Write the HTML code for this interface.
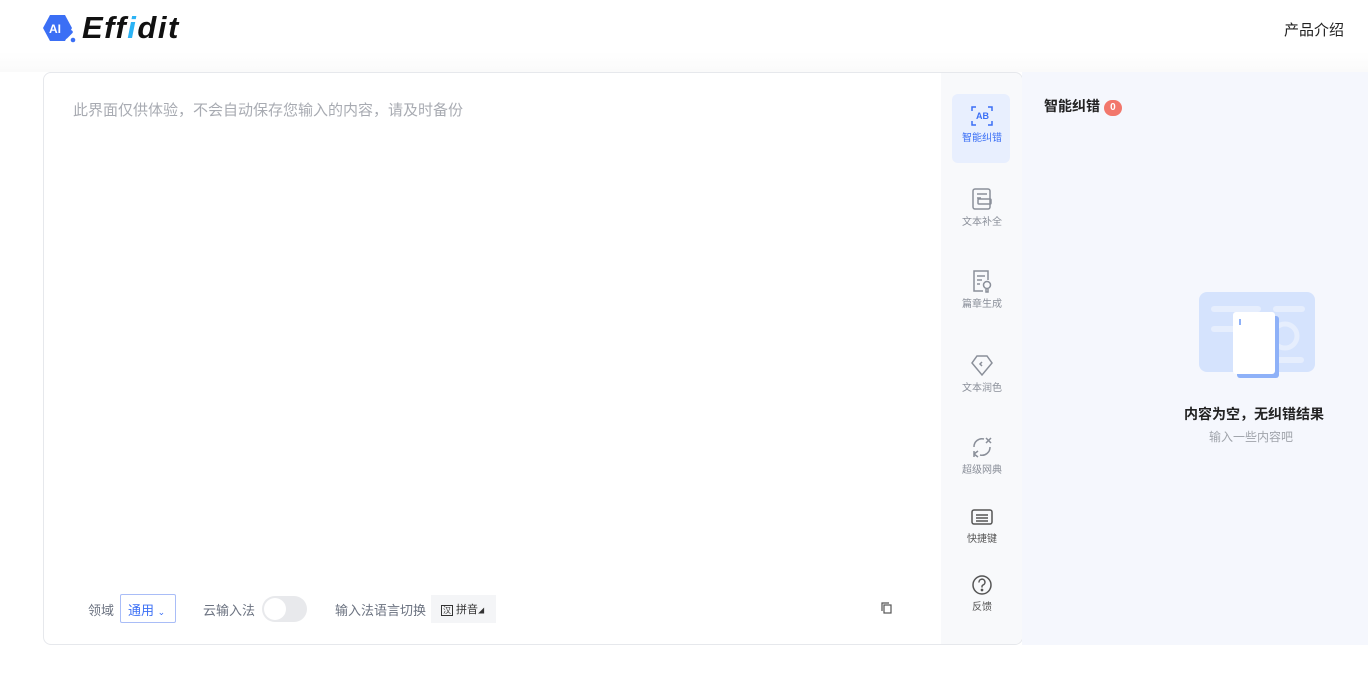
<!DOCTYPE html>
<html><head><meta charset="utf-8"><style>
*{margin:0;padding:0;box-sizing:border-box}
body{width:1368px;height:695px;background:#fff;font-family:"Liberation Sans","Noto Sans CJK SC",sans-serif;position:relative;overflow:hidden}
.abs{position:absolute}
.card{left:43px;top:72px;width:980px;height:573px;border:1px solid #e6e8ec;border-radius:8px;background:#fff;overflow:hidden}
.side{left:897px;top:0;width:82px;height:573px;background:#f8f9fb}
.it{position:absolute;left:12px;width:58px;text-align:center;font-size:10px;color:#8a8f99}
.it svg{display:block;margin:0 auto 2px}
.right{left:1022px;top:72px;width:346px;height:573px;background:#f5f7fd}
</style></head><body>
<div class="abs" style="left:42px;top:13px">
<svg width="36" height="32" viewBox="0 0 36 32"><path d="M8 2h15l7 13-7 13H8L1 15z" fill="#3b6ff5"/><text x="7" y="20" font-size="12" font-weight="bold" fill="#fff" font-family="Liberation Sans">AI</text><path d="M24 24l5-5" stroke="#3b6ff5" stroke-width="3.5" stroke-linecap="round"/><circle cx="31" cy="27" r="2.3" fill="#3b6ff5"/></svg>
</div>
<div class="abs" style="left:82px;top:10px;font-size:31px;font-weight:bold;font-style:italic;color:#111;letter-spacing:1.5px">Eff<span style="color:#2bb3f5">i</span>dit</div>
<div class="abs" style="left:1284px;top:19px;font-size:15px;color:#222">产品介绍</div>
<div class="abs" style="left:0;top:52px;width:1368px;height:20px;background:linear-gradient(#fff,#fafafa)"></div>
<div class="abs card">
<div class="abs" style="left:29px;top:26px;font-size:15px;color:#a8abb2">此界面仅供体验，不会自动保存您输入的内容，请及时备份</div>
<div class="abs" style="left:44px;top:527px;font-size:13px;color:#6b7280">领域</div>
<div class="abs" style="left:76px;top:521px;width:56px;height:29px;border:1px solid #a9bdf7;border-radius:2px;font-size:13px;color:#3b6ff5;padding:5px 0 0 7px">通用 <span style="font-size:9px">⌄</span></div>
<div class="abs" style="left:159px;top:527px;font-size:13px;color:#6b7280">云输入法</div>
<div class="abs" style="left:218px;top:523px;width:45px;height:26px;border-radius:13px;background:#e8e9ec"><div style="margin:2px;width:22px;height:22px;border-radius:11px;background:#fff"></div></div>
<div class="abs" style="left:291px;top:527px;font-size:13px;color:#6b7280">输入法语言切换</div>
<div class="abs" style="left:387px;top:522px;width:65px;height:28px;background:#f4f5f7;font-size:11px;color:#333;padding:6px 0 0 10px"><span style="border:1px solid #333;font-size:8px;padding:0 1px">汉</span> 拼音<span style="font-size:6px">◢</span></div>
<svg class="abs" style="left:836px;top:528px" width="14" height="14" viewBox="0 0 14 14" fill="none" stroke="#555" stroke-width="1.2"><rect x="4" y="4" width="7" height="8"/><path d="M2 10V2h7"/></svg>
<div class="abs side">
<div class="abs" style="left:11px;top:21px;width:58px;height:69px;background:#e8effe;border-radius:6px"></div>
<div class="it" style="top:32px;color:#3b6ff5"><svg width="24" height="22" viewBox="0 0 24 22" fill="none" stroke="#3b6ff5" stroke-width="1.5"><path d="M2 6V2h4M18 2h4v4M22 16v4h-4M6 20H2v-4"/><text x="6" y="14" font-size="9" fill="#3b6ff5" stroke="none" font-weight="bold">AB</text></svg>智能纠错</div>
<div class="it" style="top:114px"><svg width="22" height="24" viewBox="0 0 22 24" fill="none" stroke="#8a8f99" stroke-width="1.5"><rect x="2" y="2" width="17" height="20" rx="2"/><path d="M6 7h10M6 11h4"/><rect x="7" y="12" width="13" height="5" rx="1"/></svg>文本补全</div>
<div class="it" style="top:196px"><svg width="22" height="24" viewBox="0 0 22 24" fill="none" stroke="#8a8f99" stroke-width="1.5"><path d="M12 22H3V2h14v9"/><path d="M6 7h8M6 11h5M6 15h3"/><circle cx="16" cy="16" r="3.5"/><path d="M15 20v3h2v-3"/></svg>篇章生成</div>
<div class="it" style="top:280px"><svg width="24" height="24" viewBox="0 0 24 24" fill="none" stroke="#8a8f99" stroke-width="1.5"><path d="M7 3h10l5 7-10 12L2 10z"/><path d="M12 9l-2 2 2 2"/></svg>文本润色</div>
<div class="it" style="top:362px"><svg width="24" height="24" viewBox="0 0 24 24" fill="none" stroke="#8a8f99" stroke-width="1.5"><path d="M4 12a8 8 0 0 1 10-8M20 12a8 8 0 0 1-10 8"/><path d="M16 3l5 5M21 3l-5 5M4 16v6M4 19l4-3M4 19l4 3"/></svg>超级网典</div>
<div class="it" style="top:435px;color:#555"><svg width="24" height="20" viewBox="0 0 24 20" fill="none" stroke="#555" stroke-width="1.5"><rect x="2" y="2" width="20" height="14" rx="2"/><path d="M6 7h12M6 10h12M6 13h12"/></svg>快捷键</div>
<div class="it" style="top:501px;color:#555"><svg width="22" height="22" viewBox="0 0 22 22" fill="none" stroke="#555" stroke-width="1.5"><circle cx="11" cy="11" r="9"/><path d="M8 8.5a3 3 0 1 1 4 2.5c-1 .5-1 1-1 2.5"/><circle cx="11" cy="16" r=".6" fill="#555"/></svg>反馈</div>
</div>
</div>
<div class="abs right">
<div class="abs" style="left:22px;top:24px;font-size:14px;font-weight:bold;color:#222">智能纠错 <span style="display:inline-block;background:#f2776c;color:#fff;font-size:10px;width:18px;height:16px;border-radius:8px;text-align:center;line-height:16px;vertical-align:1px">0</span></div>
<svg class="abs" style="left:177px;top:220px" width="118" height="88" viewBox="0 0 118 88"><rect x="0" y="0" width="116" height="80" rx="8" fill="#d5e3fd"/><rect x="12" y="14" width="50" height="6" rx="3" fill="#e6eefd"/><rect x="74" y="14" width="32" height="6" rx="3" fill="#e6eefd"/><rect x="12" y="34" width="30" height="6" rx="3" fill="#e6eefd"/><circle cx="86" cy="44" r="12" fill="none" stroke="#e6eefd" stroke-width="5"/><rect x="60" y="65" width="45" height="6" rx="3" fill="#e6eefd"/><rect x="38" y="24" width="42" height="62" rx="3" fill="#8eb1f8"/><rect x="34" y="20" width="42" height="62" rx="3" fill="#fff"/><rect x="40" y="27" width="2" height="6" fill="#8eb1f8"/></svg>
<div class="abs" style="left:162px;top:332px;font-size:14px;font-weight:bold;color:#222">内容为空，无纠错结果</div>
<div class="abs" style="left:187px;top:356px;font-size:12px;color:#a0a4ab">输入一些内容吧</div>
</div>
</body></html>
